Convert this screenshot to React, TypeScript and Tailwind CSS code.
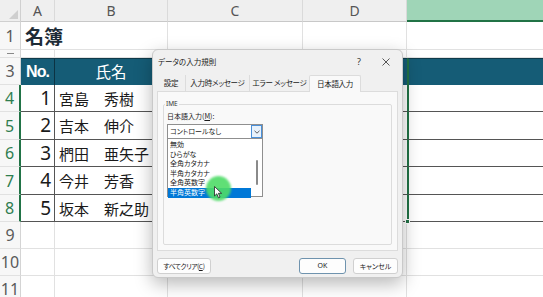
import React from "react";

const JP = "font-['Noto_Sans_CJK_JP','Noto_Sans',sans-serif]";

const GRID = "border-r border-b border-[#e1e1e1]";
const TEAL = "bg-[#155c76]";

function RowHead({ label, selected, dash }: { label?: string; selected?: boolean; dash?: boolean }) {
  return (
    <div
      className={`flex items-center justify-center bg-[#f7f7f7] border-b border-[#e1e1e1] ${
        selected ? "border-r-2 border-r-[#217346] text-[#2f7d4f]" : "border-r border-r-[#d4d4d4] text-[#5a5a5a]"
      } text-[16px] font-['Noto_Sans',sans-serif] overflow-hidden leading-none`}
    >
      {dash ? <div className="w-[7px] h-px bg-[#888]" /> : label}
    </div>
  );
}

const people = [
  ["1", "宮島　秀樹"],
  ["2", "吉本　伸介"],
  ["3", "椚田　亜矢子"],
  ["4", "今井　芳香"],
  ["5", "坂本　新之助"],
];

function ListItem({ text, selected }: { text: string; selected?: boolean }) {
  return (
    <div
      className={`h-[9.6px] leading-[9.6px] pl-[2px] whitespace-nowrap ${
        selected ? "bg-[#0078d7] text-white" : "text-[#1a1a1a]"
      }`}
    >
      {text}
    </div>
  );
}

export default function App() {
  return (
    <div className={`relative w-[543px] h-[297px] overflow-hidden bg-white ${JP}`}>
      {/* spreadsheet */}
      <div className="grid grid-cols-[21px_34px_113px_135px_104px_1fr] grid-rows-[22px_28px_8px_27px_27px_28px_27px_28px_27px_27px_27px_27px]">
        {/* column headers */}
        <div className="relative bg-[#efefef] border-r border-b border-[#d0d0d0]">
          <div className="absolute right-[2px] bottom-[2px] w-0 h-0 border-l-[9px] border-l-transparent border-b-[9px] border-b-[#cfcfcf]" />
        </div>
        {["A", "B", "C", "D"].map((c) => (
          <div
            key={c}
            className="flex items-center justify-center bg-[#efefef] border-r border-[#dadada] border-b border-b-[#c8c8c8] text-[14px] text-[#555] font-['Noto_Sans',sans-serif]"
          >
            {c}
          </div>
        ))}
        <div className="bg-[#9fd5b7] border-b-2 border-[#217346]" />

        {/* row 1 */}
        <RowHead label="1" />
        <div className={`col-span-2 flex items-center pl-[4px] ${GRID} text-[19px] font-bold text-[#1d2b36] leading-none`}>
          名簿
        </div>
        <div className={GRID} />
        <div className={GRID} />
        <div className="border-b border-[#e1e1e1]" />

        {/* row 2 */}
        <RowHead dash />
        <div className={GRID} />
        <div className={GRID} />
        <div className={GRID} />
        <div className={GRID} />
        <div className="border-b border-[#e1e1e1]" />

        {/* row 3 header */}
        <RowHead label="3" />
        <div className={`${TEAL} border-t border-t-[#0f3a4a] border-r border-r-[#0c3343] flex items-center justify-center text-white font-bold text-[16px] tracking-[-1px] font-['Liberation_Sans_Narrow','Liberation_Sans',sans-serif]`}>
          No.
        </div>
        <div className={`${TEAL} border-t border-t-[#0f3a4a] border-r border-r-[#0c3343] flex items-center justify-center text-white text-[15.5px]`}>
          氏名
        </div>
        <div className={`${TEAL} border-t border-t-[#0f3a4a]`} />
        <div className={`${TEAL} border-t border-t-[#0f3a4a]`} />
        <div className={`${TEAL} border-t border-t-[#0f3a4a] border-l-2 border-l-[#217346]`} />

        {/* data rows */}
        {people.map(([n, name], i) => (
          <React.Fragment key={n}>
            <RowHead label={String(i + 4)} selected />
            <div className="flex items-center justify-end pr-[3px] border-r border-r-[#555] border-b border-b-[#555] text-[19px] text-[#1a1a1a] font-['Noto_Sans',sans-serif] leading-none">
              {n}
            </div>
            <div className="flex items-center pl-[4px] border-r border-r-[#555] border-b border-b-[#555] text-[15px] text-[#1a1a1a] whitespace-nowrap leading-none">
              {name}
            </div>
            <div className="border-b border-[#555]" />
            <div className="border-b border-[#555]" />
            <div className="relative border-b border-[#555] border-l-2 border-l-[#217346]">
              {i === 4 && <div className="absolute -left-[4px] -bottom-[3px] w-[5px] h-[5px] bg-[#217346] border border-white" />}
            </div>
          </React.Fragment>
        ))}

        {/* empty rows */}
        {["9", "10", "11"].map((r) => (
          <React.Fragment key={r}>
            <RowHead label={r} />
            <div className={GRID} />
            <div className={GRID} />
            <div className={GRID} />
            <div className={GRID} />
            <div className="border-b border-[#e1e1e1]" />
          </React.Fragment>
        ))}
      </div>

      {/* dialog */}
      <div className="absolute left-[152px] top-[49px] w-[251px] h-[229px] flex flex-col rounded-[6px] bg-[#f0f0f0] border border-[#c9c9c9] shadow-[0_6px_18px_rgba(0,0,0,0.28)] text-[7px] text-[#1a1a1a] [font-feature-settings:'palt']">
        {/* title */}
        <div className="h-[24px] flex items-center justify-between pl-[5px] pr-[12px]">
          <span className="text-[7.5px]">データの入力規則</span>
          <div className="flex items-center gap-[21px] text-[#333]">
            <span className="text-[9px] font-['Noto_Sans',sans-serif]">?</span>
            <svg width="8" height="8" viewBox="0 0 8 8">
              <path d="M0.5 0.5 L7.5 7.5 M7.5 0.5 L0.5 7.5" stroke="#444" strokeWidth="0.9" />
            </svg>
          </div>
        </div>
        {/* tabs */}
        <div className="h-[17px] flex items-end pl-[4px] text-[7.5px] tracking-[-0.3px] whitespace-nowrap">
          <div className="w-[29px] h-[16px] flex items-center justify-center border-r border-[#dcdcdc]">設定</div>
          <div className="w-[64px] h-[16px] flex items-center justify-center border-r border-[#dcdcdc]">入力時メッセージ</div>
          <div className="w-[59px] h-[16px] flex items-center justify-center">エラー メッセージ</div>
          <div className="w-[52px] h-[17px] flex items-center justify-center bg-[#f9f9f9] border border-b-0 border-[#dcdcdc] rounded-t-[2px] relative top-px z-10">
            日本語入力
          </div>
        </div>
        {/* panel */}
        <div className="mx-[4px] h-[160px] bg-[#f9f9f9] border border-[#dcdcdc] flex flex-col px-[5px] pt-[12px] pb-[5px]">
          <div className="relative flex-1 border border-[#dcdcdc] rounded-[2px] pl-[3px] pt-[6px]">
            <span className="absolute -top-[6px] left-[1px] bg-[#f9f9f9] px-px text-[6.5px] font-['Noto_Sans',sans-serif] text-[#333]">IME</span>
            <div className="text-[7px] leading-[10px]">
              日本語入力(<span className="underline">M</span>):
            </div>
            <div className="mt-[3px] w-[96px] h-[15px] flex bg-white border border-[#8f8f8f]">
              <div className="flex-1 flex items-center pl-[2px] text-[7px]">コントロールなし</div>
              <div className="w-[11px] flex items-center justify-center border border-[#4a90d9] bg-[#e8f2fc]">
                <svg width="6" height="4" viewBox="0 0 6 4">
                  <path d="M0.5 0.8 L3 3.2 L5.5 0.8" fill="none" stroke="#333" strokeWidth="0.8" />
                </svg>
              </div>
            </div>
            <div className="w-[96px] h-[58px] flex bg-white border border-t-0 border-[#8f8f8f]">
              <div className="flex-1 pt-[1px] text-[7px]">
                <ListItem text="無効" />
                <ListItem text="ひらがな" />
                <ListItem text="全角カタカナ" />
                <ListItem text="半角カタカナ" />
                <ListItem text="全角英数字" />
                <ListItem text="半角英数字" selected />
              </div>
              <div className="w-[11px] flex justify-center pt-[21px]">
                <div className="w-[2px] h-[25px] rounded-full bg-[#8a8a8a]" />
              </div>
            </div>
          </div>
        </div>
        {/* buttons */}
        <div className="mt-[7px] flex items-center px-[4px] text-[7px] whitespace-nowrap">
          <div className="w-[54px] h-[16px] flex items-center justify-center bg-[#fdfdfd] border border-[#d0d0d0] rounded-[3px] text-[6.8px] tracking-[-0.5px]">
            すべてクリア(<span className="underline">C</span>)
          </div>
          <div className="ml-auto w-[47px] h-[16px] flex items-center justify-center bg-[#fdfdfd] border-[1.5px] border-[#6f93ae] rounded-[3px] font-['Noto_Sans',sans-serif]">
            OK
          </div>
          <div className="ml-[7px] w-[45px] h-[16px] flex items-center justify-center bg-[#fdfdfd] border border-[#d0d0d0] rounded-[3px]">
            キャンセル
          </div>
        </div>
      </div>

      {/* cursor highlight */}
      <div className="absolute left-[206px] top-[176px] w-[25px] h-[25px] rounded-full bg-[#4fdc68] opacity-90 blur-[0.8px]" />
      <svg className="absolute left-[214px] top-[186px]" width="9" height="13" viewBox="0 0 9 13">
        <path d="M0.5 0.5 L0.5 10 L2.8 7.8 L4.5 11.8 L6 11.1 L4.4 7.3 L7.6 7.3 Z" fill="white" stroke="#222" strokeWidth="0.8" strokeLinejoin="round" />
      </svg>
    </div>
  );
}
